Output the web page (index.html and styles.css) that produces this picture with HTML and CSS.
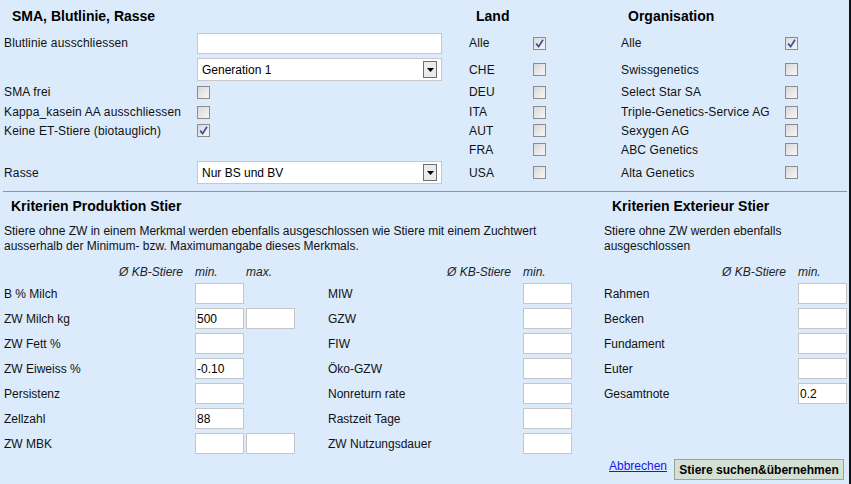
FILE: index.html
```html
<!DOCTYPE html>
<html lang="de">
<head>
<meta charset="utf-8">
<title>Stiere suchen</title>
<link rel="stylesheet" href="styles.css">
</head>
<body>
<div class="page">
  <section class="top">
    <h2 class="title t-left">SMA, Blutlinie, Rasse</h2>
    <h2 class="title t-land">Land</h2>
    <h2 class="title t-org">Organisation</h2>

    <span class="lbl">Blutlinie ausschliessen</span>
    <span><input class="text" type="text"></span>
    <span class="lbl">Alle</span>
    <span class="cb checked"><svg viewBox="0 0 11 11" width="11" height="11"><path d="M2.2 5.6 L4.6 8.6 L9 1.8" fill="none" stroke="#3d4f9c" stroke-width="1.7"/></svg></span>
    <span class="lbl">Alle</span>
    <span class="cb checked"><svg viewBox="0 0 11 11" width="11" height="11"><path d="M2.2 5.6 L4.6 8.6 L9 1.8" fill="none" stroke="#3d4f9c" stroke-width="1.7"/></svg></span>

    <span></span>
    <div class="select"><span>Generation 1</span><span class="arrow"><svg viewBox="0 0 7 4" width="7" height="4"><polygon points="0,0 7,0 3.5,4" fill="#000"/></svg></span></div>
    <span class="lbl">CHE</span>
    <span class="cb"></span>
    <span class="lbl">Swissgenetics</span>
    <span class="cb"></span>

    <span class="lbl">SMA frei</span>
    <span class="cb"></span>
    <span class="lbl">DEU</span>
    <span class="cb"></span>
    <span class="lbl">Select Star SA</span>
    <span class="cb"></span>

    <span class="lbl">Kappa_kasein AA ausschliessen</span>
    <span class="cb"></span>
    <span class="lbl">ITA</span>
    <span class="cb"></span>
    <span class="lbl">Triple-Genetics-Service AG</span>
    <span class="cb"></span>

    <span class="lbl">Keine ET-Stiere (biotauglich)</span>
    <span class="cb checked"><svg viewBox="0 0 11 11" width="11" height="11"><path d="M2.2 5.6 L4.6 8.6 L9 1.8" fill="none" stroke="#3d4f9c" stroke-width="1.7"/></svg></span>
    <span class="lbl">AUT</span>
    <span class="cb"></span>
    <span class="lbl">Sexygen AG</span>
    <span class="cb"></span>

    <span></span>
    <span></span>
    <span class="lbl">FRA</span>
    <span class="cb"></span>
    <span class="lbl">ABC Genetics</span>
    <span class="cb"></span>

    <span class="lbl">Rasse</span>
    <div class="select"><span>Nur BS und BV</span><span class="arrow"><svg viewBox="0 0 7 4" width="7" height="4"><polygon points="0,0 7,0 3.5,4" fill="#000"/></svg></span></div>
    <span class="lbl">USA</span>
    <span class="cb"></span>
    <span class="lbl">Alta Genetics</span>
    <span class="cb"></span>
  </section>

  <div class="rule"></div>

  <section class="lower">
    <div class="prod">
      <h2 class="title sub prod-title">Kriterien Produktion Stier</h2>
      <p class="note">Stiere ohne ZW in einem Merkmal werden ebenfalls ausgeschlossen wie Stiere mit einem Zuchtwert ausserhalb der Minimum- bzw. Maximumangabe dieses Merkmals.</p>
      <div class="prod-grids">
        <div class="crit crit-a">
          <span class="avg">Ø KB-Stiere</span><span class="hd">min.</span><span class="hd">max.</span>
          <span class="lbl">B % Milch</span><input class="num" type="text"><span></span>
          <span class="lbl">ZW Milch kg</span><input class="num" type="text" value="500"><input class="num" type="text">
          <span class="lbl">ZW Fett %</span><input class="num" type="text"><span></span>
          <span class="lbl">ZW Eiweiss %</span><input class="num" type="text" value="-0.10"><span></span>
          <span class="lbl">Persistenz</span><input class="num" type="text"><span></span>
          <span class="lbl">Zellzahl</span><input class="num" type="text" value="88"><span></span>
          <span class="lbl">ZW MBK</span><input class="num" type="text"><input class="num" type="text">
        </div>
        <div class="crit crit-b">
          <span class="avg">Ø KB-Stiere</span><span class="hd">min.</span>
          <span class="lbl">MIW</span><input class="num" type="text">
          <span class="lbl">GZW</span><input class="num" type="text">
          <span class="lbl">FIW</span><input class="num" type="text">
          <span class="lbl">Öko-GZW</span><input class="num" type="text">
          <span class="lbl">Nonreturn rate</span><input class="num" type="text">
          <span class="lbl">Rastzeit Tage</span><input class="num" type="text">
          <span class="lbl">ZW Nutzungsdauer</span><input class="num" type="text">
        </div>
      </div>
    </div>
    <div class="ext">
      <h2 class="title sub ext-title">Kriterien Exterieur Stier</h2>
      <p class="note">Stiere ohne ZW werden ebenfalls ausgeschlossen</p>
      <div class="crit crit-c">
        <span class="avg">Ø KB-Stiere</span><span class="hd">min.</span>
        <span class="lbl">Rahmen</span><input class="num" type="text">
        <span class="lbl">Becken</span><input class="num" type="text">
        <span class="lbl">Fundament</span><input class="num" type="text">
        <span class="lbl">Euter</span><input class="num" type="text">
        <span class="lbl">Gesamtnote</span><input class="num" type="text" value="0.2">
      </div>
      <div class="actions">
        <a class="link" href="#">Abbrechen</a>
        <button class="btn" type="button">Stiere suchen&amp;übernehmen</button>
      </div>
    </div>
  </section>
</div>
</body>
</html>
```
FILE: styles.css
```css
html, body {
  margin: 0;
  padding: 0;
  background: #dbebfc;
}

body {
  font-family: "Liberation Sans", Arial, sans-serif;
  font-size: 12px;
  color: #111;
}

.page {
  width: 851px;
  height: 484px;
  box-sizing: border-box;
  padding: 4px 0 0 4px;
  border-right: 2px solid #111;
  background: #dbebfc;
  overflow: hidden;
}

.title {
  margin: 0;
  font-size: 14px;
  font-weight: bold;
  color: #000;
}

/* ---------- top section ---------- */
.top {
  display: grid;
  grid-template-columns: 193px 272px 64px 88px 164px 13px;
  grid-template-rows: 24px 30px 23px 22px 18px 19px 19px 27px;
  align-items: center;
}

.t-left { grid-column: 1 / span 2; padding-left: 8px; }
.t-land { grid-column: 3 / span 2; padding-left: 7px; }
.t-org  { grid-column: 5 / span 2; padding-left: 7px; }

.lbl {
  white-space: nowrap;
}

.top .lbl {
  letter-spacing: 0.15px;
}

.text {
  display: block;
  width: 245px;
  height: 21px;
  box-sizing: border-box;
  margin: 0;
  border: 1px solid #c8c8c8;
  background: #fff;
  font: 12px "Liberation Sans", Arial, sans-serif;
  padding: 0 4px;
}

.select {
  width: 245px;
  height: 23px;
  box-sizing: border-box;
  border: 1px solid #c8c8c8;
  background: #fff;
  display: flex;
  align-items: center;
  justify-content: space-between;
  padding: 0 4px 0 4px;
  color: #000;
}

.arrow {
  width: 14px;
  height: 17px;
  box-sizing: border-box;
  border: 1px solid #6e6e6e;
  background: #ebebeb;
  display: flex;
  align-items: center;
  justify-content: center;
  padding-top: 1px;
}

.arrow svg { display: block; }

.cb {
  display: flex;
  align-items: center;
  justify-content: center;
  width: 13px;
  height: 13px;
  box-sizing: border-box;
  border: 1px solid #8c8c8c;
  background: linear-gradient(135deg, #d9d9d9 0%, #f6f6f6 100%);
}

.cb svg { display: block; }

/* ---------- separator ---------- */
.rule {
  height: 0;
  border-top: 1px solid #8c97a2;
  margin: 5px 2px 0 -1px;
}

/* ---------- lower section ---------- */
.lower {
  display: flex;
}

.prod {
  width: 600px;
  flex: none;
}

.ext {
  flex: 1;
}

.sub {
  height: 28px;
  line-height: 28px;
}

.prod-title { padding-left: 7px; }
.ext-title  { padding-left: 8px; }

.note {
  margin: 4px 0 0;
  line-height: 15px;
  color: #111;
}

.prod .note { width: 590px; }

.prod-grids {
  display: flex;
  margin-top: 9px;
}

.crit {
  display: grid;
  grid-template-rows: 18px repeat(7, 25px);
  align-items: center;
  column-gap: 2px;
}

.crit-a { grid-template-columns: 189px 49px 49px; }
.crit-b { grid-template-columns: 193px 49px; margin-left: 33px; }
.crit-c { grid-template-columns: 192px 49px; grid-template-rows: 18px repeat(5, 25px); margin-top: 9px; }

.avg {
  font-style: italic;
  text-align: right;
  padding-right: 10px;
  color: #222;
}

.hd {
  font-style: italic;
  color: #222;
}

.num {
  width: 49px;
  height: 21px;
  box-sizing: border-box;
  margin: 0;
  border: 1px solid #c6c6c6;
  background: #fff;
  padding: 0 1px;
  font: 12px "Liberation Sans", Arial, sans-serif;
  color: #000;
}

.actions {
  display: flex;
  align-items: flex-start;
  gap: 7px;
  margin-top: 53px;
  padding-left: 5px;
}

.link {
  color: #1717ee;
  text-decoration: underline;
  line-height: 15px;
}

.btn {
  width: 170px;
  height: 21px;
  box-sizing: border-box;
  margin: 0;
  padding: 0;
  border: 1px solid #9ba39b;
  background: #d5e0d4;
  font: bold 12px "Liberation Sans", Arial, sans-serif;
  color: #000;
}
```
